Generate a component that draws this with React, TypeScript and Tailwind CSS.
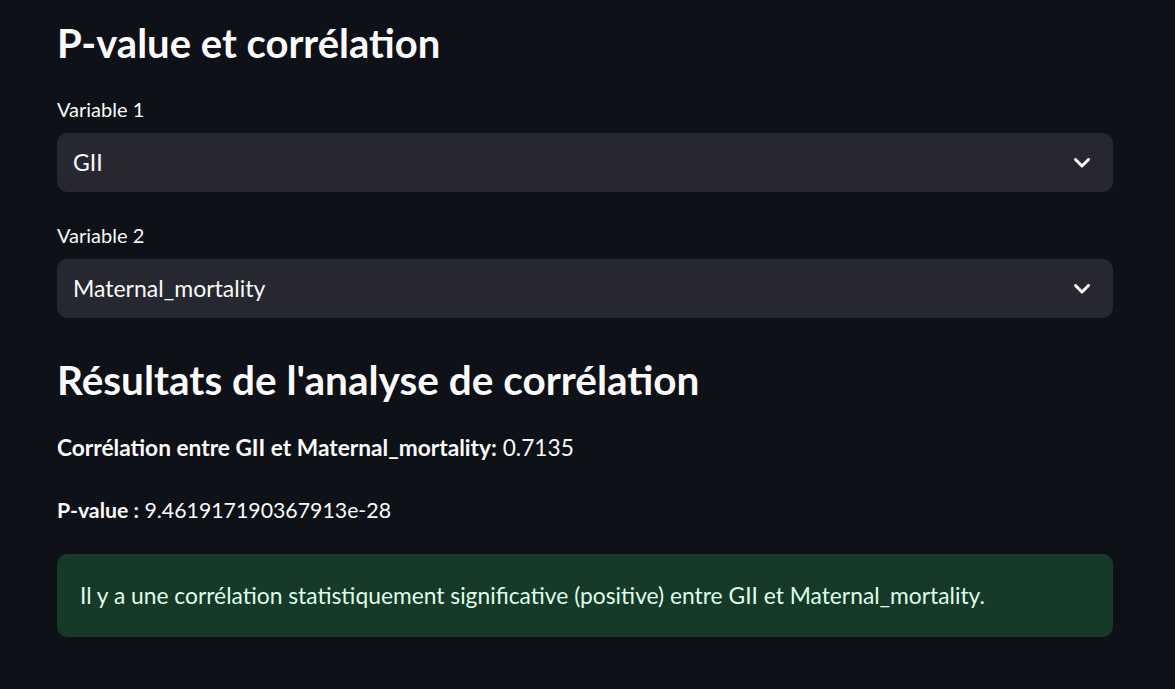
const Chevron = () => (
  <svg width="16" height="10" viewBox="0 0 16 10" fill="none" className="text-[#fafafa]">
    <polyline
      points="1.5,1.5 8,8 14.5,1.5"
      stroke="currentColor"
      strokeWidth="3"
      strokeLinecap="round"
      strokeLinejoin="round"
    />
  </svg>
);

const Select = ({ value }: { value: string }) => (
  <div className="mt-[13px] flex h-[59px] items-center justify-between rounded-[10px] bg-[#262730] pl-[16px] pr-[23px]">
    <span className="text-[23px] text-[#fafafa]">{value}</span>
    <Chevron />
  </div>
);

export default function App() {
  return (
    <div
      className="min-h-[689px] w-full bg-[#0e1117] px-[57px] text-[#fafafa]"
      style={{ fontFamily: "Lato, 'Noto Sans', sans-serif" }}
    >
      <div className="w-[1056px] pt-[20px]">
        <h1 className="text-[40px] font-bold leading-[46px]">P-value et corrélation</h1>

        <div className="mt-[32px] text-[20px] leading-[22px]">Variable 1</div>
        <Select value="GII" />

        <div className="mt-[32px] text-[20px] leading-[22px]">Variable 2</div>
        <Select value="Maternal_mortality" />

        <h2 className="mt-[39px] text-[40.5px] font-bold leading-[46px]">
          Résultats de l'analyse de corrélation
        </h2>

        <p className="mt-[31px] text-[22.7px] leading-[28px]">
          <span className="font-bold">Corrélation entre GII et Maternal_mortality:</span> 0.7135
        </p>
        <p className="mt-[34px] text-[21.3px] leading-[28px]">
          <span className="font-bold">P-value :</span> 9.461917190367913e-28
        </p>

        <div className="mt-[30px] flex h-[83px] items-center rounded-[10px] bg-[#173928] px-[23px] text-[22.8px] text-[#dffde9]">
          Il y a une corrélation statistiquement significative (positive) entre GII et Maternal_mortality.
        </div>
      </div>
    </div>
  );
}
